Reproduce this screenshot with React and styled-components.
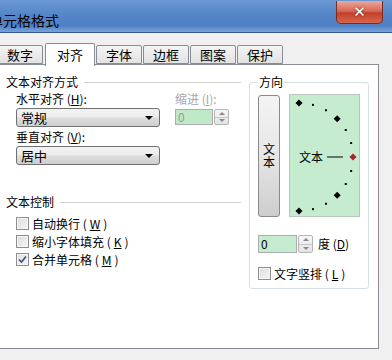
import React from 'react';
import styled, { createGlobalStyle } from 'styled-components';

const GlobalStyle = createGlobalStyle`
  html, body { margin: 0; padding: 0; background: #f0f0f0; }
  body {
    font-family: "Noto Sans CJK SC", "Noto Sans", sans-serif;
    font-size: 12px;
    color: #000;
  }
  * { box-sizing: border-box; }
`

const Window = styled.div`
  width: 392px;
  height: 360px;
  background: #f0f0f0;
  display: flex;
  flex-direction: column;
  overflow: hidden;
`
const TitleBar = styled.div`
  height: 33px;
  flex: none;
  display: flex;
  align-items: flex-start;
  justify-content: space-between;
  background: linear-gradient(to bottom, #6a98d4 0%, #5586c8 45%, #4f80c3 80%, #7aa3da 100%);
  border-bottom: 1px solid #34598f;
`
const Title = styled.div`
  font-size: 14px;
  line-height: 16px;
  margin: 12px 0 0 -11px;
  white-space: nowrap;
`
const CloseButton = styled.div`
  width: 47px;
  height: 23px;
  margin: 1px 9px 0 0;
  border: 1px solid #7a2c22;
  border-top: none;
  border-radius: 0 0 5px 5px;
  background: linear-gradient(to bottom, #e9a99c 0%, #d66a57 45%, #c2402b 55%, #d9644c 100%);
  display: flex;
  align-items: center;
  justify-content: center;
  color: #fff;
  font-family: "DejaVu Sans", sans-serif;
  font-weight: bold;
  font-size: 15px;
  text-shadow: 0 0 2px #5a1a10;
`
const Body = styled.div`
  flex: none;
  padding-top: 10px;
`
const TabStrip = styled.div`
  display: flex;
  align-items: flex-end;
  gap: 1px;
  height: 21px;
  margin-left: -3px;
  position: relative;
  z-index: 1;
`
const Tab = styled.div`
  width: ${p => (p.$active ? 50 : 46)}px;
  height: ${p => (p.$active ? 23 : 19)}px;
  margin-left: ${p => (p.$active ? 1 : 0)}px;
  margin-bottom: ${p => (p.$active ? -2 : 0)}px;
  border: 1px solid #898c95;
  border-bottom: ${p => (p.$active ? 'none' : '1px solid #898c95')};
  border-radius: 2px 2px 0 0;
  background: ${p => (p.$active ? '#fff' : 'linear-gradient(to bottom, #f4f4f4, #e2e2e2)')};
  display: flex;
  align-items: center;
  justify-content: center;
  font-size: 13px;
  line-height: 16px;
  padding-top: ${p => (p.$active ? 0 : 1)}px;
`
const Panel = styled.div`
  margin-left: -1px;
  width: 380px;
  height: 285px;
  background: #fff;
  border: 1px solid #898c95;
  padding: 9px 0 0 6px;
  display: flex;
  align-items: flex-start;
`
const LeftColumn = styled.div`
  width: 235px;
  display: flex;
  flex-direction: column;
`
const GroupHeader = styled.div`
  display: flex;
  align-items: center;
  gap: 6px;
  height: 16px;
  line-height: 16px;
  margin-top: ${p => p.$top || 0}px;
  white-space: nowrap;
  &::after {
    content: '';
    flex: 1;
    height: 1px;
    background: #d5d5d0;
  }
`
const AlignGrid = styled.div`
  display: grid;
  grid-template-columns: 144px 54px;
  column-gap: 15px;
  padding-left: 10px;
  margin-top: 1px;
`
const Label = styled.div`
  height: 16px;
  line-height: 16px;
  white-space: nowrap;
  color: ${p => (p.$disabled ? '#a7a7a7' : '#000')};
  margin-top: ${p => p.$top || 0}px;
  margin-left: ${p => p.$left || 0}px;
  u { text-decoration: underline; }
`
const Combo = styled.div`
  height: 19px;
  margin-top: 1px;
  border: 1px solid #707070;
  border-radius: 3px;
  background: linear-gradient(to bottom, #f3f3f3 0%, #ebebeb 48%, #dddddd 52%, #cfcfcf 100%);
  display: flex;
  align-items: center;
  justify-content: space-between;
  padding: 0 6px 0 4px;
  font-size: 13px;
  &::after {
    content: '';
    border-left: 4px solid transparent;
    border-right: 4px solid transparent;
    border-top: 4px solid #000;
  }
`
const SpinWrap = styled.div`
  display: flex;
  align-items: center;
  gap: 1px;
  height: ${p => p.$h || 16}px;
  margin-top: ${p => p.$top || 0}px;
`
const SpinInput = styled.div`
  width: ${p => p.$w}px;
  height: 100%;
  background: ${p => (p.$disabled ? '#c0e9c8' : '#c6ecd0')};
  border: 1px solid #abadb3;
  color: ${p => (p.$disabled ? '#9a9a9a' : '#000')};
  font-size: 12px;
  line-height: 14px;
  padding-left: 2px;
  display: flex;
  align-items: center;
`
const SpinButtons = styled.div`
  width: 15px;
  height: 100%;
  border: 1px solid #b5b5b5;
  border-radius: 2px;
  display: flex;
  flex-direction: column;
  background: linear-gradient(to bottom, #f6f6f6, #e4e4e4);
`
const SpinHalf = styled.div`
  flex: 1;
  display: flex;
  align-items: center;
  justify-content: center;
  &:first-child { border-bottom: 1px solid #c8c8c8; }
  &::after {
    content: '';
    border-left: 3px solid transparent;
    border-right: 3px solid transparent;
    ${p => (p.$down ? 'border-top: 3px solid #8a8a8a;' : 'border-bottom: 3px solid #8a8a8a;')}
  }
`
const CheckList = styled.div`
  display: flex;
  flex-direction: column;
  padding-left: 10px;
  margin-top: 4px;
`
const CheckRow = styled.div`
  display: flex;
  align-items: center;
  gap: 3px;
  height: 18px;
  white-space: nowrap;
  margin-top: ${p => p.$top || 0}px;
`
const Box = styled.div`
  width: 13px;
  height: 13px;
  border: 1px solid #8f8f8f;
  background: linear-gradient(135deg, #dcdcdc, #f6f6f6);
  box-shadow: inset 0 0 0 1px #f4f4f4;
  display: flex;
  align-items: center;
  justify-content: center;
`
const Fieldset = styled.fieldset`
  margin: 0 0 0 8px;
  width: 120px;
  height: 215px;
  padding: 0 8px;
  border: 1px solid #d5dfe5;
  border-radius: 3px;
`
const Legend = styled.legend`
  padding: 0 1px;
  line-height: 16px;
  font-size: 12px;
`
const OrientRow = styled.div`
  display: flex;
  align-items: flex-start;
  gap: 9px;
`
const VerticalButton = styled.div`
  width: 22px;
  height: 122px;
  margin-top: 5px;
  border: 1px solid #8a8a8a;
  border-radius: 3px;
  background: linear-gradient(to bottom, #f4f4f4 0%, #e6e6e6 50%, #cdcdcd 100%);
  display: flex;
  align-items: center;
  justify-content: center;
  writing-mode: vertical-rl;
  text-orientation: upright;
  font-size: 12px;
  letter-spacing: 1px;
`
const Dial = styled.div`
  width: 71px;
  height: 123px;
  margin-top: 4px;
  background: #c6ecd0;
  border: 1px solid #b8c8bc;
`

// 13 marks every 15 degrees on a half circle, centre (9, 62), radius 54
const dots = [];
for (let a = 90; a >= -90; a -= 15) {
  const r = (a * Math.PI) / 180;
  dots.push({ a, x: 9 + 54 * Math.cos(r), y: 62 - 54 * Math.sin(r) });
}

const OrientDial = () => (
  <Dial>
    <svg width="69" height="121" viewBox="0 0 69 121">
      {dots.map(d => {
        if (d.a % 45 === 0 || d.a === 0) {
          return (
            <rect key={d.a} x={d.x - 2.5} y={d.y - 2.5} width="5" height="5"
              fill={d.a === 0 ? '#a8232a' : '#000'}
              transform={`rotate(45 ${d.x} ${d.y})`} />
          )
        }
        return <rect key={d.a} x={d.x - 1} y={d.y - 1} width="2" height="2" fill="#000" />
      })}
      <text x="9" y="67" fontSize="12" fontFamily="Noto Sans CJK SC, sans-serif" fill="#000">文本</text>
      <line x1="37" y1="62" x2="53" y2="62" stroke="#000" strokeWidth="1" />
    </svg>
  </Dial>
)

const Spin = ({ w, value, disabled, h, top }) => (
  <SpinWrap $h={h} $top={top}>
    <SpinInput $w={w} $disabled={disabled}>{value}</SpinInput>
    <SpinButtons>
      <SpinHalf />
      <SpinHalf $down />
    </SpinButtons>
  </SpinWrap>
)

const Check = ({ checked }) => (
  <Box>
    {checked && (
      <svg width="9" height="9" viewBox="0 0 9 9">
        <path d="M1 4.5 L3.5 7 L8 1.5" stroke="#3b4f86" strokeWidth="1.6" fill="none" />
      </svg>
    )}
  </Box>
)

const tabs = ['数字', '对齐', '字体', '边框', '图案', '保护'];

export default function App() {
  return (
    <>
      <GlobalStyle />
      <Window>
        <TitleBar>
          <Title>单元格格式</Title>
          <CloseButton>✕</CloseButton>
        </TitleBar>
        <Body>
          <TabStrip>
            {tabs.map(t => <Tab key={t} $active={t === '对齐'}>{t}</Tab>)}
          </TabStrip>
          <Panel>
            <LeftColumn>
              <GroupHeader>文本对齐方式</GroupHeader>
              <AlignGrid>
                <Label>水平对齐 (<u>H</u>):</Label>
                <Label $disabled>缩进 (<u>I</u>):</Label>
                <Combo>常规</Combo>
                <Spin w={38} value="0" disabled top={2} />
                <Label $top={2}>垂直对齐 (<u>V</u>):</Label>
                <div />
                <Combo>居中</Combo>
              </AlignGrid>
              <GroupHeader $top={29}>文本控制</GroupHeader>
              <CheckList>
                <CheckRow><Check />自动换行 (<u>W</u>)</CheckRow>
                <CheckRow><Check />缩小字体填充 (<u>K</u>)</CheckRow>
                <CheckRow><Check checked />合并单元格 (<u>M</u>)</CheckRow>
              </CheckList>
            </LeftColumn>
            <Fieldset>
              <Legend>方向</Legend>
              <OrientRow>
                <VerticalButton>文本</VerticalButton>
                <OrientDial />
              </OrientRow>
              <SpinWrap $h={18} $top={18}>
                <SpinInput $w={39}>0</SpinInput>
                <SpinButtons>
                  <SpinHalf />
                  <SpinHalf $down />
                </SpinButtons>
                <Label $left={4}>度 (<u>D</u>)</Label>
              </SpinWrap>
              <CheckRow $top={11}><Check />文字竖排 (<u>L</u>)</CheckRow>
            </Fieldset>
          </Panel>
        </Body>
      </Window>
    </>
  );
}
